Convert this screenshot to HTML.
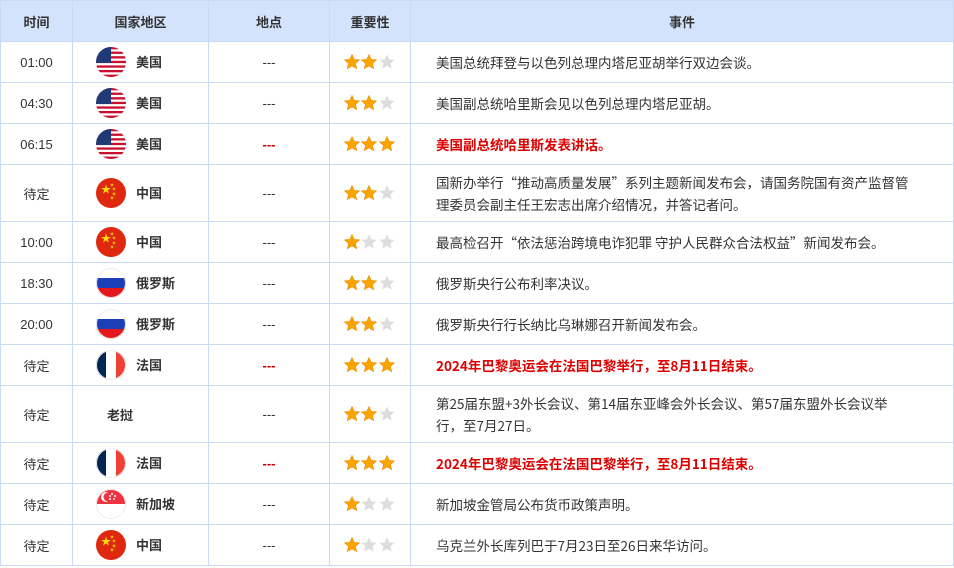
<!DOCTYPE html>
<html><head><meta charset="utf-8"><style>
body{margin:0;background:#fff;font-family:"Liberation Sans","Noto Sans CJK SC",sans-serif;font-size:13px;color:#333}
table{border-collapse:collapse;width:954px;table-layout:fixed}
td,th{border:1px solid #c9daf5;text-align:center;padding:0}
th{background:#d3e3fc;height:40px;font-weight:bold;font-size:13px;color:#333}
td{height:40px}
tr.t td{height:56px}
.c{text-align:left;padding-left:23px;white-space:nowrap}
.f{display:flex;align-items:center;height:30px}
.f svg{margin-right:10px;flex:none}
.f b{font-weight:bold;display:block;line-height:14px;font-family:"Noto Sans CJK SC",sans-serif;font-size:13px}
.e{text-align:left;padding:0 10px 0 25px;line-height:22px;font-family:"Noto Sans CJK SC","Liberation Sans",sans-serif;font-size:13.5px;white-space:nowrap}
.r{color:#d00;font-weight:bold}
.s{text-align:left;padding-left:14px}
.s svg{display:block}
.rd{color:#c00;font-weight:bold}
</style></head><body>
<svg width="0" height="0" style="position:absolute">
<defs>
<clipPath id="cc"><circle cx="15" cy="15" r="15"/></clipPath>
<g id="us"><g clip-path="url(#cc)"><rect width="30" height="30" fill="#fff"/><g fill="#c8102e"><rect y="0" width="30" height="2.3"/><rect y="4.6" width="30" height="2.3"/><rect y="9.2" width="30" height="2.3"/><rect y="13.8" width="30" height="2.3"/><rect y="18.4" width="30" height="2.3"/><rect y="23" width="30" height="2.3"/><rect y="27.6" width="30" height="2.4"/></g><rect width="15" height="16" fill="#1f3a74"/></g></g>
<g id="cn"><circle cx="15" cy="15" r="15" fill="#de2910"/><text x="5" y="15" font-size="10" fill="#ffde00">★</text><g fill="#ffde00" font-size="4"><text x="14" y="8">★</text><text x="16" y="12">★</text><text x="16" y="17">★</text><text x="14" y="21">★</text></g></g>
<g id="ru"><g clip-path="url(#cc)"><rect width="30" height="10" fill="#fff"/><rect y="10" width="30" height="10" fill="#1c3fb8"/><rect y="20" width="30" height="10" fill="#e4181c"/></g><circle cx="15" cy="15" r="14.5" fill="none" stroke="#eee"/></g>
<g id="fr"><g clip-path="url(#cc)"><rect width="10" height="30" fill="#002654"/><rect x="10" width="10" height="30" fill="#fff"/><rect x="20" width="10" height="30" fill="#ef4135"/></g><circle cx="15" cy="15" r="14.5" fill="none" stroke="#eee"/></g>
<g id="sg"><g clip-path="url(#cc)"><rect width="30" height="15" fill="#ef3340"/><rect y="15" width="30" height="15" fill="#fff"/><circle cx="10" cy="8" r="5" fill="#fff"/><circle cx="12" cy="8" r="4.5" fill="#ef3340"/><g fill="#fff"><circle cx="16" cy="5" r="1"/><circle cx="19" cy="7" r="1"/><circle cx="18" cy="10" r="1"/><circle cx="14" cy="10" r="1"/><circle cx="14" cy="7" r="1"/></g></g><circle cx="15" cy="15" r="14.5" fill="none" stroke="#eee"/></g>
<polygon id="st" points="8,0.5 10.2,5.4 15.5,5.9 11.5,9.4 12.7,14.6 8,11.9 3.3,14.6 4.5,9.4 0.5,5.9 5.8,5.4"/>
<g id="s3"><use href="#st" fill="#f9a500" stroke="#f08a00" stroke-width=".6"/><use href="#st" x="17" fill="#f9a500" stroke="#f08a00" stroke-width=".6"/><use href="#st" x="35" fill="#f9a500" stroke="#f08a00" stroke-width=".6"/></g>
<g id="s2"><use href="#st" fill="#f9a500" stroke="#f08a00" stroke-width=".6"/><use href="#st" x="17" fill="#f9a500" stroke="#f08a00" stroke-width=".6"/><use href="#st" x="35" fill="#ddd"/></g>
<g id="s1"><use href="#st" fill="#f9a500" stroke="#f08a00" stroke-width=".6"/><use href="#st" x="17" fill="#ddd"/><use href="#st" x="35" fill="#ddd"/></g>
</defs></svg>
<table>
<colgroup><col style="width:72px"><col style="width:136px"><col style="width:121px"><col style="width:81px"><col></colgroup>
<tr><th>时间</th><th>国家地区</th><th>地点</th><th>重要性</th><th>事件</th></tr>
<tr><td>01:00</td><td class="c"><div class="f"><svg width="30" height="30"><use href="#us"/></svg><b>美国</b></div></td><td>---</td><td class="s"><svg width="52" height="16"><use href="#s2"/></svg></td><td class="e">美国总统拜登与以色列总理内塔尼亚胡举行双边会谈。</td></tr>
<tr><td>04:30</td><td class="c"><div class="f"><svg width="30" height="30"><use href="#us"/></svg><b>美国</b></div></td><td>---</td><td class="s"><svg width="52" height="16"><use href="#s2"/></svg></td><td class="e">美国副总统哈里斯会见以色列总理内塔尼亚胡。</td></tr>
<tr><td>06:15</td><td class="c"><div class="f"><svg width="30" height="30"><use href="#us"/></svg><b>美国</b></div></td><td class="rd">---</td><td class="s"><svg width="52" height="16"><use href="#s3"/></svg></td><td class="e r">美国副总统哈里斯发表讲话。</td></tr>
<tr class="t"><td>待定</td><td class="c"><div class="f"><svg width="30" height="30"><use href="#cn"/></svg><b>中国</b></div></td><td>---</td><td class="s"><svg width="52" height="16"><use href="#s2"/></svg></td><td class="e">国新办举行“推动高质量发展”系列主题新闻发布会，请国务院国有资产监督管<br>理委员会副主任王宏志出席介绍情况，并答记者问。</td></tr>
<tr><td>10:00</td><td class="c"><div class="f"><svg width="30" height="30"><use href="#cn"/></svg><b>中国</b></div></td><td>---</td><td class="s"><svg width="52" height="16"><use href="#s1"/></svg></td><td class="e">最高检召开“依法惩治跨境电诈犯罪 守护人民群众合法权益”新闻发布会。</td></tr>
<tr><td>18:30</td><td class="c"><div class="f"><svg width="30" height="30"><use href="#ru"/></svg><b>俄罗斯</b></div></td><td>---</td><td class="s"><svg width="52" height="16"><use href="#s2"/></svg></td><td class="e">俄罗斯央行公布利率决议。</td></tr>
<tr><td>20:00</td><td class="c"><div class="f"><svg width="30" height="30"><use href="#ru"/></svg><b>俄罗斯</b></div></td><td>---</td><td class="s"><svg width="52" height="16"><use href="#s2"/></svg></td><td class="e">俄罗斯央行行长纳比乌琳娜召开新闻发布会。</td></tr>
<tr><td>待定</td><td class="c"><div class="f"><svg width="30" height="30"><use href="#fr"/></svg><b>法国</b></div></td><td class="rd">---</td><td class="s"><svg width="52" height="16"><use href="#s3"/></svg></td><td class="e r">2024年巴黎奥运会在法国巴黎举行，至8月11日结束。</td></tr>
<tr class="t"><td>待定</td><td class="c" style="padding-left:34px"><b>老挝</b></td><td>---</td><td class="s"><svg width="52" height="16"><use href="#s2"/></svg></td><td class="e">第25届东盟+3外长会议、第14届东亚峰会外长会议、第57届东盟外长会议举<br>行，至7月27日。</td></tr>
<tr><td>待定</td><td class="c"><div class="f"><svg width="30" height="30"><use href="#fr"/></svg><b>法国</b></div></td><td class="rd">---</td><td class="s"><svg width="52" height="16"><use href="#s3"/></svg></td><td class="e r">2024年巴黎奥运会在法国巴黎举行，至8月11日结束。</td></tr>
<tr><td>待定</td><td class="c"><div class="f"><svg width="30" height="30"><use href="#sg"/></svg><b>新加坡</b></div></td><td>---</td><td class="s"><svg width="52" height="16"><use href="#s1"/></svg></td><td class="e">新加坡金管局公布货币政策声明。</td></tr>
<tr><td>待定</td><td class="c"><div class="f"><svg width="30" height="30"><use href="#cn"/></svg><b>中国</b></div></td><td>---</td><td class="s"><svg width="52" height="16"><use href="#s1"/></svg></td><td class="e">乌克兰外长库列巴于7月23日至26日来华访问。</td></tr>
</table>
</body></html>
